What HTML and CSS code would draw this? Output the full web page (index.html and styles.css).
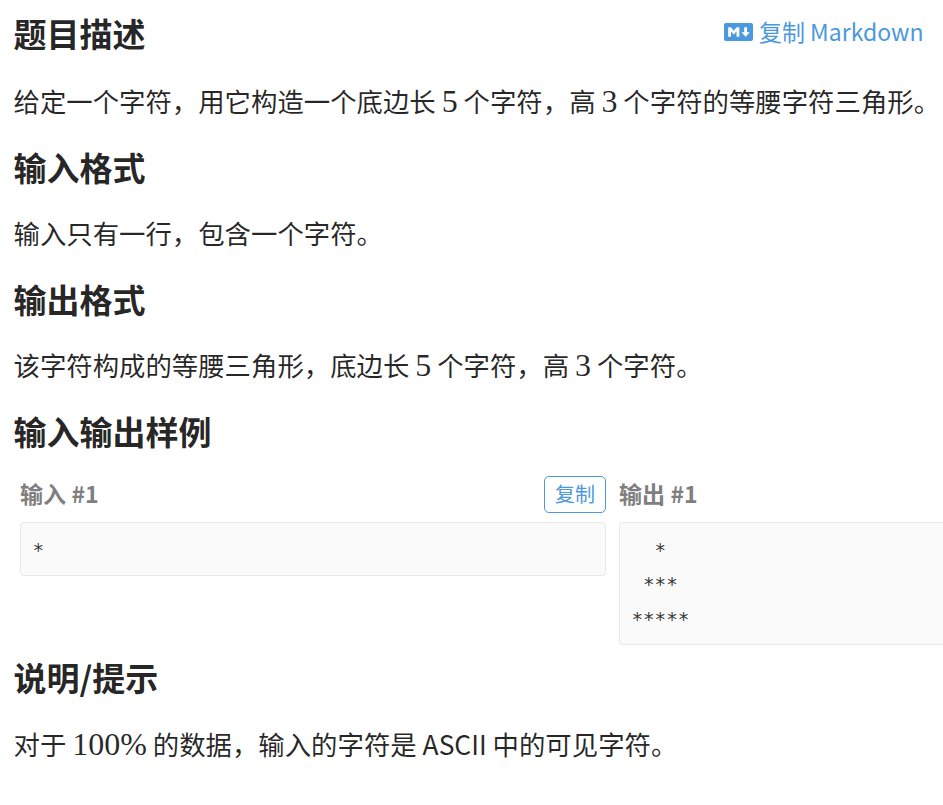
FILE: index.html
```html
<!DOCTYPE html>
<html lang="zh-CN">
<head>
<meta charset="utf-8">
<title>题目描述</title>
<link rel="stylesheet" href="styles.css">
</head>
<body>
<main class="problem">
  <div class="title-row">
    <h2 class="heading">题目描述</h2>
    <a class="copy-md">
      <svg class="md-icon" viewBox="0 0 208 128"><rect width="208" height="128" rx="14" fill="#4c98de"/><path fill="#fff" d="M30 98V30h20l20 25 20-25h20v68H90V59L70 84 50 59v39zm125 0l-30-33h20V30h20v35h20z"/></svg>
      <span>复制 Markdown</span>
    </a>
  </div>
  <p class="para">给定一个字符，用它构造一个底边长 <span class="math">5</span> 个字符，高 <span class="math">3</span> 个字符的等腰字符三角形。</p>
  <h2 class="heading">输入格式</h2>
  <p class="para">输入只有一行，包含一个字符。</p>
  <h2 class="heading">输出格式</h2>
  <p class="para">该字符构成的等腰三角形，底边长 <span class="math">5</span> 个字符，高 <span class="math">3</span> 个字符。</p>
  <h2 class="heading">输入输出样例</h2>
  <div class="samples">
    <section class="sample">
      <div class="sample-head"><span class="sample-title">输入 #1</span><button class="copy-btn">复制</button></div>
      <pre class="code">*</pre>
    </section>
    <section class="sample">
      <div class="sample-head"><span class="sample-title">输出 #1</span></div>
      <pre class="code">  *
 ***
*****</pre>
    </section>
  </div>
  <h2 class="heading">说明/提示</h2>
  <p class="para para-last">对于 <span class="math">100%</span> 的数据，输入的字符是 ASCII 中的可见字符。</p>
</main>
</body>
</html>
```
FILE: styles.css
```css
html, body { margin: 0; padding: 0; background: #fff; overflow: hidden; }
body { font-family: "Noto Sans CJK SC", "Noto Sans", sans-serif; color: rgba(0,0,0,.85); font-size: 26.4px; line-height: 1.5; }
.problem { padding: 0 14px 0 13.5px; width: 915px; }
.title-row { display: flex; justify-content: space-between; align-items: flex-start; height: 67.5px; margin-right: 5px; }
.heading { margin: 0; font-size: 33px; font-weight: 700; line-height: 66px; color: rgba(0,0,0,.87); }
.para { margin: 0; height: 66px; line-height: 66px; white-space: nowrap; }
.para-last { margin-top: 1px; }
.math { font-family: "Liberation Serif", serif; font-size: 32px; }
.copy-md { display: flex; align-items: center; gap: 6px; color: #4c98de; font-size: 23px; margin-top: 14px; }
.md-icon { display: block; width: 29px; height: 18px; margin-top: 2px; }
.samples { display: flex; gap: 13px; padding: 12px 0 0 6.5px; margin-bottom: -1px; width: 1185px; }
.sample { flex: 1 1 0; }
.sample-head { display: flex; justify-content: space-between; align-items: center; height: 37px; margin-bottom: 9px; }
.sample-title { font-size: 23.1px; font-weight: 700; color: #7f7f7f; margin-bottom: 2px; }
.copy-btn { font: inherit; font-size: 20px; line-height: 1; color: #4c98de; background: #fff; border: 1px solid #4c98de; border-radius: 5px; width: 62px; height: 37px; padding: 0; }
.code { margin: 0; padding: 11px 11.5px 6.5px; background: #fafafa; border: 1px solid #e8e8e8; border-radius: 4px; font-family: "DejaVu Sans Mono", monospace; font-size: 19.2px; line-height: 34.65px; color: rgba(0,0,0,.8); }
```
